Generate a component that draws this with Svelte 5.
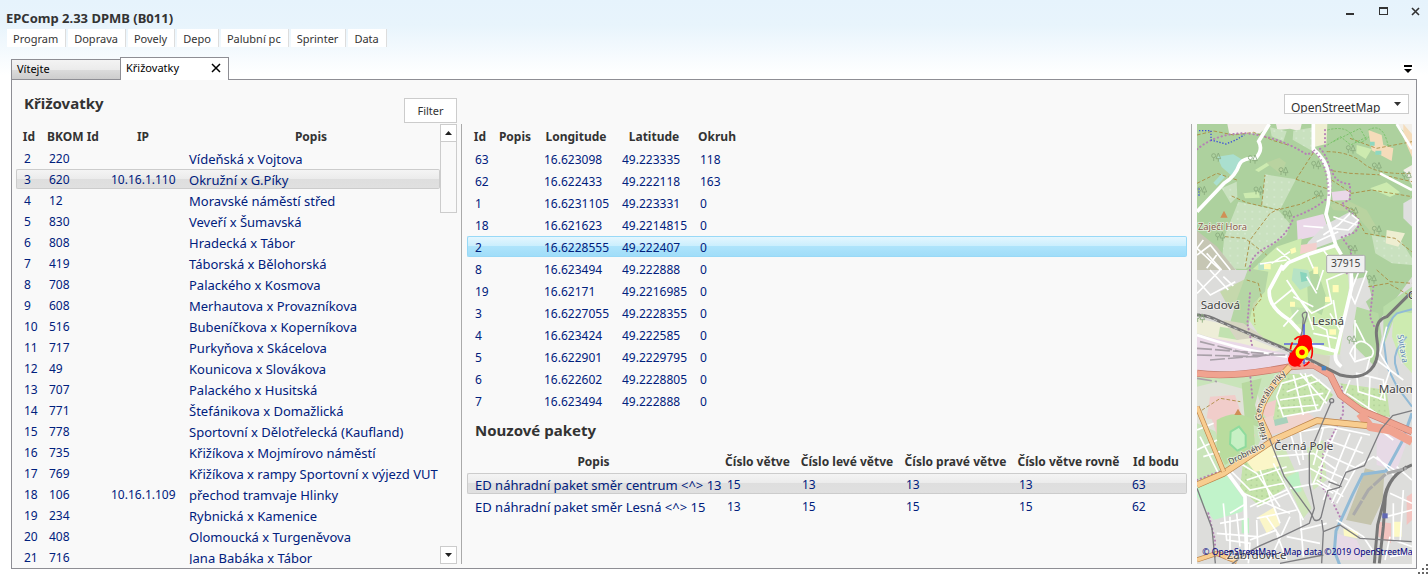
<script>
  const menu = ['Program', 'Doprava', 'Povely', 'Depo', 'Palubní pc', 'Sprinter', 'Data'];

  const crossings = [
    { id: 2, bkom: 220, ip: '', name: 'Vídeňská x Vojtova' },
    { id: 3, bkom: 620, ip: '10.16.1.110', name: 'Okružní x G.Píky' },
    { id: 4, bkom: 12, ip: '', name: 'Moravské náměstí střed' },
    { id: 5, bkom: 830, ip: '', name: 'Veveří x Šumavská' },
    { id: 6, bkom: 808, ip: '', name: 'Hradecká x Tábor' },
    { id: 7, bkom: 419, ip: '', name: 'Táborská x Bělohorská' },
    { id: 8, bkom: 708, ip: '', name: 'Palackého x Kosmova' },
    { id: 9, bkom: 608, ip: '', name: 'Merhautova x Provazníkova' },
    { id: 10, bkom: 516, ip: '', name: 'Bubeníčkova x Koperníkova' },
    { id: 11, bkom: 717, ip: '', name: 'Purkyňova x Skácelova' },
    { id: 12, bkom: 49, ip: '', name: 'Kounicova x Slovákova' },
    { id: 13, bkom: 707, ip: '', name: 'Palackého x Husitská' },
    { id: 14, bkom: 771, ip: '', name: 'Štefánikova x Domažlická' },
    { id: 15, bkom: 778, ip: '', name: 'Sportovní x Dělotřelecká (Kaufland)' },
    { id: 16, bkom: 735, ip: '', name: 'Křižíkova x Mojmírovo náměstí' },
    { id: 17, bkom: 769, ip: '', name: 'Křižíkova x rampy Sportovní x výjezd VUT' },
    { id: 18, bkom: 106, ip: '10.16.1.109', name: 'přechod tramvaje Hlinky' },
    { id: 19, bkom: 234, ip: '', name: 'Rybnická x Kamenice' },
    { id: 20, bkom: 408, ip: '', name: 'Olomoucká x Turgeněvova' },
    { id: 21, bkom: 716, ip: '', name: 'Jana Babáka x Tábor' },
  ];

  const points = [
    [63, '16.623098', '49.223335', 118],
    [62, '16.622433', '49.222118', 163],
    [1, '16.6231105', '49.223331', 0],
    [18, '16.621623', '49.2214815', 0],
    [2, '16.6228555', '49.222407', 0],
    [8, '16.623494', '49.222888', 0],
    [19, '16.62171', '49.2216985', 0],
    [3, '16.6227055', '49.2228355', 0],
    [4, '16.623424', '49.222585', 0],
    [5, '16.622901', '49.2229795', 0],
    [6, '16.622602', '49.2228805', 0],
    [7, '16.623494', '49.222888', 0],
  ];

  const packets = [
    { name: 'ED náhradní paket směr centrum <^> 13', values: [15, 13, 13, 13, 63] },
    { name: 'ED náhradní paket směr Lesná <^> 15', values: [13, 15, 15, 15, 62] },
  ];

  // positions of the tree symbols in the woods
  const trees = [[78, 112], [188, 118], [378, 135], [482, 88], [560, 140], [650, 168], [36, 212], [205, 212], [386, 224], [292, 284], [490, 275], [560, 330], [90, 350], [545, 478], [485, 660], [30, 595], [488, 388], [280, 154]];

  let selectedCrossing = 3;
  let selectedPoint = 2;
  let selectedPacket = 0;
  let mapSource = 'OpenStreetMap';
</script>

<div class="window">
  <header>
    <h1>EPComp 2.33 DPMB (B011)</h1>
    <div class="window-buttons">
      <button aria-label="Minimalizovat">
        <svg width="12" height="12" viewBox="0 0 12 12"><rect x="2" y="7" width="8" height="2" fill="#333" /></svg>
      </button>
      <button aria-label="Maximalizovat">
        <svg width="12" height="12" viewBox="0 0 12 12"><path d="M2 1h9v8H2z M3 3v5h7V3z" fill="#333" fill-rule="evenodd" /></svg>
      </button>
      <button aria-label="Zavřít">
        <svg width="12" height="12" viewBox="0 0 12 12"><path d="M2 2l7 7M9 2L2 9" stroke="#333" stroke-width="1.600" /></svg>
      </button>
    </div>
  </header>

  <nav>
    {#each menu as item}
      <button>{item}</button>
    {/each}
  </nav>

  <div class="tabs">
    <button class="tab">Vítejte</button>
    <div class="tab active">
      <button>Křižovatky</button>
      <button class="close" aria-label="Zavřít záložku">
        <svg width="10" height="10" viewBox="0 0 10 10"><path d="M1 1l8 8M9 1L1 9" stroke="#000" stroke-width="1.500" /></svg>
      </button>
    </div>
    <button class="tab-list" aria-label="Seznam záložek">
      <svg width="8" height="8" viewBox="0 0 8 8"><path d="M0 0h8v2H0z M0 4h8l-4 4z" fill="#000" /></svg>
    </button>
  </div>

  <main>
    <section class="crossings">
      <div class="bar">
        <h2>Křižovatky</h2>
        <button class="filter">Filter</button>
      </div>
      <div class="list">
        <div class="rows">
          <table>
            <colgroup>
              <col class="w-id"><col class="w-bkom"><col class="w-coord"><col>
            </colgroup>
            <thead>
              <tr><th>Id</th><th>BKOM Id</th><th>IP</th><th>Popis</th></tr>
            </thead>
            <tbody>
              {#each crossings as c}
                <tr class:selected={c.id === selectedCrossing} on:click={() => (selectedCrossing = c.id)}>
                  <td>{c.id}</td>
                  <td>{c.bkom}</td>
                  <td>{c.ip}</td>
                  <td class="name">{c.name}</td>
                </tr>
              {/each}
            </tbody>
          </table>
        </div>
        <div class="scrollbar">
          <button aria-label="Nahoru">
            <svg width="8" height="4" viewBox="0 0 8 4"><path d="M0 4h7L3.500 0z" fill="#222" /></svg>
          </button>
          <div class="thumb"></div>
          <button class="down" aria-label="Dolů">
            <svg width="8" height="4" viewBox="0 0 8 4"><path d="M0 0h7L3.500 4z" fill="#222" /></svg>
          </button>
        </div>
      </div>
    </section>

    <section class="detail">
      <table class="tall">
        <colgroup>
          <col class="w-id"><col class="w-popis"><col class="w-coord"><col class="w-coord"><col class="w-okruh"><col>
        </colgroup>
        <thead>
          <tr><th>Id</th><th>Popis</th><th>Longitude</th><th>Latitude</th><th>Okruh</th><th></th></tr>
        </thead>
        <tbody>
          {#each points as [id, lon, lat, okruh]}
            <tr class:active={id === selectedPoint} on:click={() => (selectedPoint = id)}>
              <td>{id}</td>
              <td></td>
              <td>{lon}</td>
              <td>{lat}</td>
              <td>{okruh}</td>
              <td></td>
            </tr>
          {/each}
        </tbody>
      </table>

      <h2>Nouzové pakety</h2>
      <table class="tall">
        <colgroup>
          <col><col class="w-branch"><col class="w-left"><col class="w-right"><col class="w-right"><col class="w-point">
        </colgroup>
        <thead>
          <tr>
            <th>Popis</th>
            <th>Číslo větve</th>
            <th>Číslo levé větve</th>
            <th>Číslo pravé větve</th>
            <th>Číslo větve rovně</th>
            <th>Id bodu</th>
          </tr>
        </thead>
        <tbody>
          {#each packets as packet, i}
            <tr class:selected={i === selectedPacket} on:click={() => (selectedPacket = i)}>
              <td class="name">{packet.name}</td>
              {#each packet.values as value}
                <td>{value}</td>
              {/each}
            </tr>
          {/each}
        </tbody>
      </table>
    </section>

    <section class="map">
      <div class="source">
        <select aria-label="Mapový podklad" bind:value={mapSource}>
          <option>OpenStreetMap</option>
        </select>
        <svg width="7" height="4" viewBox="0 0 7 4"><path d="M0 0h7L3.500 4z" fill="#333" /></svg>
      </div>

      <svg class="canvas" viewBox="21 12 645 1320" preserveAspectRatio="xMinYMin slice">
        <defs>
          <pattern id="orchard" width="22" height="22" patternUnits="userSpaceOnUse">
            <rect width="22" height="22" fill="#c9e1bf" />
            <circle cx="11" cy="11" r="2" fill="#e4f0df" />
          </pattern>
          <pattern id="garden" width="16" height="16" patternUnits="userSpaceOnUse">
            <rect width="16" height="16" fill="#c5e3aa" />
            <circle cx="8" cy="8" r="1.500" fill="#7fa56c" />
          </pattern>
          <g id="tree" fill="none" stroke="#88aa7c" stroke-width="2.500">
            <circle cx="-7" cy="-5" r="6" />
            <path d="M-7 1v10M7 -13l-7 17h14zM7 4v9" />
          </g>
          <path id="piky" d="M232 958L212 880Q222 835 285 765" />
        </defs>

        <!-- land use -->
        <rect x="21" y="12" width="645" height="1320" fill="#dddddb" />
        <path d="M21 12H666V470L600 560 560 610 480 450 300 430 200 490 150 460 21 340z" fill="#add19e" />
        <path d="M112 12H240L210 40 118 42z M258 12H335L330 34 300 26 262 30z M620 12H666V60z M640 150l26-15v60z" fill="#f2efe9" />
        <path d="M225 163l93 15-48 92-55-15z M145 245l120 25 35 42-10 33-60 42-62 60-75-2 10-95z M310 32l62-10-4 72-60-35z M240 22l50 12-10 30-35-15z M95 205l45-20 2 45-20 20z M545 345l90 20 31 50v20l-60-5-50-30z" fill="url(#orchard)" />
        <path d="M82 110l48-7 30 18-35 46-30-26z M70 188l25-27 10 10-25 26z" fill="#aadfcf" />
        <path d="M372 12h40l-3 60-34 8z M590 330l55 10-20 40-38-10z" fill="#eeeed1" />
        <path d="M535 30l40 15 5 30 30 10-5 38-60-32z M640 12l26 30v70l-26-60z" fill="#f5dcba" />
        <path d="M540 65h14v12h-14z M556 92h18v12h-18z" fill="#8fd8c0" />
        <path d="M228 128l40-15 20 15-15 35-25-20z M420 255l50-15 60 30 40 70-20 5-60-70-60-5z" fill="#b9d3a0" />
        <path d="M195 150l35-22 8 8-32 20z M160 220l45-5 5 18-45 2z M500 75l45 12-18 30-28-18z M540 205l50-18 40 30-30 14z" fill="#cdebb0" />
        <path d="M320 302l80-20 12 38-22 25-67 16z M425 216l55-6-4 30-48 2z" fill="#ead8e8" />
        <path d="M405 315l75-40 28 35-28 35-50 20-95 35 20-35z M640 250l26-15v85l-26-25z" fill="#dfdfdf" />
        <path d="M325 376l55-8v30l-55 5z" fill="#f3cfcd" />
        <path d="M180 455l80-75 75-25-5 48 113-30 30 80 10 110-30 140-120 10-120-60-60-90z" fill="#cdebb0" />
        <path d="M480 480l50-10 15 60-35 30-5 140 60-10v90l-100-20-15-60z" fill="#dfdfdd" />
        <path d="M500 560l65 20 10 70-20 90-60-60-5-60z M350 460l30-15 30 90-15 50-40-20z" fill="#b5d8a3" />
        <path d="M21 332l60 48 60 75H21z" fill="#c6c6b4" />
        <path d="M21 450h155l-15 70-60 50-80-10z" fill="#dcdcda" />
        <path d="M90 515l80-40 45 20-20 75-80-10z" fill="#c5d8ac" />
        <path d="M175 445l60 10-10 60-35 35-20 90-50-30 20-70z" fill="#b5d6a5" />
        <path d="M21 595l140 30 20 30 90 35-60 10L21 640z" fill="#eeeed8" />
        <path d="M21 645l130 25 150 35 5 40-160 12L21 752z" fill="#ead9e8" />
        <path d="M90 620l60 10-5 30-60-10z M300 560l50 5 5 40-40 10z" fill="#c2e2b0" />
        <path d="M310 445l45 5 10 45-35 15-25-30z M205 430h30v20h-30z" fill="#b7e3c5" />
        <path d="M330 455l20 5 2 22-18 4z" fill="#89d4bd" />
        <path d="M300 388l16-6 3 14-15 6z M222 432h20v16h-20z M428 495h18v22h-18z M405 530h15v16h-15z M300 545h15v15h-15z M418 628h20v16h-20z M370 440h14v22h-14z" fill="#fffcb8" />
        <path d="M21 755h280l-70 160-40 90L21 1090z" fill="#c9e4ba" />
        <path d="M21 800l60-15 90 25 25-10 15 50-30 70-80 25-80-35z" fill="#e0e2d8" />
        <path d="M60 830l75-5 20 60-55 20-50-10z M60 880l75 5 60 60-15 50-75 10-20-45z M200 860l70-25 30 40-60 30z" fill="#f1cdca" />
        <path d="M155 790l60-15-20 80 20 70-50-20z" fill="#b8d9a0" />
        <path d="M220 895l110-35 40 30 10 20-150 38z" fill="#f0d4ce" />
        <path d="M80 900q60-35 110 0l5 80-90 55-25-50z" fill="#b9dc9e" />
        <path d="M122 935l25-15 20 25v35l-25 12-22-20z" fill="#c7f0c4" stroke="#8edb9d" stroke-width="6" />
        <path d="M250 890l35-14 10 32-40 10z" fill="#a8d1bb" />
        <path d="M100 600l60 10 60 40-80 10z M370 700l50 8-5 50-50-20z" fill="#d6d5c2" />
        <path d="M270 760l100 5 60 60-40 40-140 35z" fill="url(#garden)" />
        <path d="M450 790l140 20 10 80-90-5z M160 1020l90-20 40 100-80 60-60-55z" fill="url(#garden)" />
        <path d="M250 995l35-10 80 180-25 30z M350 985l50-25 10 120-40 30z" fill="#d0e6bb" />
        <path d="M165 1018l85-45 20 65-75 18z M205 1190l50-30 15 55-40 25z" fill="#fbf6c8" />
        <path d="M21 1100l85-40 65 90-15 25-85 25-50-70z" fill="#c1f3ca" />
        <path d="M155 1195h22v45h-22z M290 1072l35-18 10 60-22 5z" fill="#bdf0c4" />
        <path d="M525 1045l58 15-5 80-35 75-75-15 50-130z" fill="#c5c4ad" />
        <path d="M560 950l40-30 60 20-40 110-60-15z M440 1240l60 20 30 60h-90z" fill="#e7dae6" />
        <path d="M565 1205l38 5v60l-38-20z M650 1130l16-10v80l-16 15z" fill="#f2c4c0" />
        <path d="M610 1205h25v45h-25z M460 1225l45 10-3 20-40-8z" fill="#fdf9c4" />
        <path d="M580 560l86-60v80l-56 20-30 80z" fill="#b9dda8" />
        <path d="M610 590l25-15 31 5v180l-35-40-25-70z" fill="#cdebb0" />

        <!-- footpaths and tracks -->
        <g fill="none" stroke="#a9873b" stroke-width="2.500" stroke-dasharray="11 6">
          <path d="M21 45l50-12 60 12 60-8 60 25 50 15" />
          <path d="M318 178l100 30 M318 178l52-80 M270 268l60-15 60-28 M265 270l-95-22-45-20 M270 265l-30 15-60 80-15 85 M215 255l10-90" />
          <path d="M410 95q70 0 110 35t146 30 M410 150l70 10 100 5 86 20 M480 55l80 30 106-20 M425 180l60 40 60-10 121 20" />
          <path d="M420 240l70 30 35 70 90 15 50 40 M105 350l60 5 65 50 M21 190l60-30 60 20" />
          <path d="M560 450l40 35 66 5 M535 500l60-10 70 40 M170 480l35 10 10 45-25 30 5 50 M21 880l70-45 60 10" />
        </g>
        <g fill="none" stroke="#7cc36c" stroke-width="3" stroke-dasharray="7 4">
          <path d="M412 30q60-15 75 20t50 0 M412 75l40-25 30 25 50-25 M430 65l80-40 20 35 M535 30q45-25 60 50" />
        </g>
        <g fill="none" stroke="#b581b5" stroke-width="6" stroke-linecap="round" stroke-dasharray="1 11">
          <path d="M21 88q60-50 150-48 100 12 180 64l40-18q38 40 30 140-40 40-110 65-20 60-80 90t-50 80" />
          <path d="M405 30v50 M425 150q10 40 55 42v45l-25 15 50 45q5 20-10 40l-40 15 30 40-15 70" />
          <path d="M550 500l-10 90 15 35 M180 520l-8 90 15 70 M180 760l8 80 M455 800l5 80-60 120-10 90 40 60 22 45 M55 1180l20 80v60 M21 1080l80-30" />
        </g>
        <g fill="none" stroke="#3a4dda" stroke-width="4" stroke-dasharray="4 5">
          <path d="M27 32h36v28l45 12 30-12 25-16 M27 205v25" />
        </g>

        <!-- watercourses -->
        <g fill="none" stroke="#91bad6" stroke-width="9">
          <path d="M666 568l-45 12q-25 20-40 80l10 80 30 60 45 60" stroke-width="6" />
          <path d="M650 650q-40 40-35 80l10 35" stroke-width="6" />
          <path d="M666 880l-30 85-48 88-70 10-30 60-50 110-5 60 25 65" />
        </g>

        <!-- residential streets -->
        <g fill="none" stroke="#fff" stroke-width="5">
          <path d="M21 405l40-30 60 75 M21 385l70 65 M40 360l-19 25 M50 445l30-40 M95 450l-45-50" />
          <path d="M340 318l60 5 M400 345l45-30 35-35 25 20-30 30-50-5 M380 365l65-30 M430 290l70 25 M260 385l40 35 M210 432l80-12 M300 395l-55 35 M350 400l20 45 M400 390l30 40" />
          <path d="M21 480l40 45 75-40 M60 450l55 60 M21 520l70-70 M100 470l30 28" />
          <path d="M250 555l55-45 60 70 60-30-15-70 60-25 M290 480l60 90 20 60 M310 530l60 30 M280 620l45-50 M370 640l70 15 M430 540l10 60 M350 470l30 50 M400 450l-20 60 M360 605l50 25 10 55 M420 580l30 50" />
          <path d="M480 520l30-75 20 10-35 95z M480 700q20-50 50-30t15 40l-50 15z M495 600v120 M497 610l30 60 M540 710l-15 60 M590 620l-20 80 30 50-30 90 M560 720l80 60 M500 760l80 20 5 60-80-25z M540 770l-5 120 M470 820l90 60 M480 780l-20 50" />
          <path d="M275 790l90-25 55 45 -30 60-110 20-20-60z M290 815l100-35 M270 840l130-20 M310 765l30 120 M345 760l35 110 M265 865l120-10 M330 760l80 90" />
          <path d="M270 945l150-25 120 25 M300 935l30 100 M330 930l10 90 M400 925l-30 110 M440 930l-70 160 M480 940l-80 200 M515 950l-90 200 M250 1010l120-10 70 50 M280 1060l80-15 80 45 M300 1105l80-15 50 30 M410 960l110 40 M400 1000l100 45 M385 1040l90 40 M380 1080l80 50" />
          <path d="M120 1050l60 60 100-20 M150 1030l50 30 70 100 M170 1080l120-40 M180 1160l110-50 M210 1050l60 160 M250 1030l90 170 M160 1120l140 60 M200 1195l120-25 M295 1120l-95 40 M230 1190l40 60" />
          <path d="M100 1150l10 110 70 10-5 60 M120 1190v130 M90 1210l80-15 M140 1180l10 100 M180 1260l80-30 M200 1200l5 120 M300 1190l-60 130 M330 1230l80-20 M290 1250l100 20 M330 1180l10 130 M80 1240l120 10 M260 1240l30 80" />
          <path d="M21 990l60-30 M30 950l60 120 M21 930l50-20 M40 1010l50-15 M120 1180l50-30 M440 1150l60-110 50-30 80 50 M570 930l40 30 M560 1010l55 60 M620 1040l46 40 M600 1120l66 30 M590 1190l76-20 M610 1150v110l56 20 M640 1110l-10 160 M440 1200l80 50 40 60 M600 1250l-15 70 M600 1310l66-10" />
        </g>
        <g fill="none" stroke="#fff" stroke-width="11">
          <path d="M238 12l-32 52q14 25-8 50-42 0-50 20-12 35-45 55L21 275" />
          <path d="M370 12v75q38 32 46 75 8 60-8 120l30 95 16 27" />
          <path d="M275 450l20-22 60-25 85-28" />
          <path d="M278 435l-40 75q-5 50 60 90l70 75 75 20 M484 435v70l-45 190q-10 25 15 45" />
          <path d="M21 645q130 45 270 65" stroke-width="8" />
          <path d="M110 1055l55 75 5 190" />
          <path d="M620 12l46 75 M570 160l96 50" stroke-width="8" />
        </g>
        <path d="M371 90q44 45 45 140" fill="none" stroke="#b98bba" stroke-width="7" stroke-dasharray="4 8" />

        <!-- main roads -->
        <g fill="none" stroke-linejoin="round">
          <path d="M21 760q100 15 280-20l70-5 50 30 30 60 60 45 60 25 95 40" stroke="#c87b6d" stroke-width="21" />
          <path d="M21 760q100 15 280-20l70-5 50 30 30 60 60 45 60 25 95 40" stroke="#f0a390" stroke-width="17" />
          <path d="M510 880l30 40 60 10 66 35" stroke="#f0a390" stroke-width="26" />
          <path d="M300 740q-85 85-92 150l30 65 M21 1095l80-35 150-100 130-58 150 15" stroke="#bd8449" stroke-width="20" />
          <path d="M300 740q-85 85-92 150l30 65 M21 1095l80-35 150-100 130-58 150 15" stroke="#f8cd90" stroke-width="16" />
          <path d="M21 860l80 195 M21 1320l60-20 60 25" stroke="#bd8449" stroke-width="15" />
          <path d="M21 860l80 195 M21 1320l60-20 60 25" stroke="#f8cd90" stroke-width="11" />
        </g>

        <!-- railways and tram lines -->
        <g fill="none" stroke="#777">
          <path d="M21 585q30-2 70 20l180 75 100 45 80 40q60 15 90-15t20-90 30-70l75-75" stroke-width="9" />
          <path d="M30 580l70 30 200 85 90 45" stroke="#e5e5e5" stroke-width="2" stroke-dasharray="12 10" />
          <path d="M30 665l160 40 110 0 M21 685l200 15 M21 705l180 5 50-10 M60 720l180-15 M21 775l60 10" stroke="#a8a0a8" stroke-width="5" stroke-dasharray="45 9" />
          <path d="M666 1035q-75 30-85 110l-18 70-10 115 M650 1040q-65 40-65 110l-5 70-12 110" stroke-width="9" />
          <path d="M490 1185l45-75 55-50 60-15" stroke="#aaa" stroke-width="9" stroke-dasharray="50 4" />
        </g>
        <g fill="none" stroke="#7d7d80" stroke-width="4">
          <path d="M335 650l5-55q-8-15 4-18t4 18l-18 60" />
          <path d="M238 955l45 115 80 110 10 20q15 5 20-8l20-80 35-10 20-45 55-20 50-110 35-40 58-15" />
          <path d="M424 845l-66 155v90l15 75-15 45-95 45q-100 35-160 100 M395 1200l5 35-5 95 M400 1235l50-20 60 40 155 10" />
          <path d="M21 1105l45 120 10 105 M270 1330l130-25 M415 1085l40 15" />
          <circle cx="425" cy="842" r="6" />
        </g>
        <path d="M577 1180h16v15h-16z" fill="#6168b4" />
        <path d="M395 738h13v13h-13z" fill="#4a82bd" />

        {#each trees as [x, y]}
          <use href="#tree" {x} {y} />
        {/each}
        <path d="M102 272l11 21H91z M144 866l11 19h-22z" fill="#d08f55" />

        <g class="labels">
          <text class="peak" x="24" y="331">Zaječí Hora</text>
          <text x="32" y="566">Sadová</text>
          <text x="366" y="614">Lesná</text>
          <text x="654" y="538">O</text>
          <text x="566" y="818">Malom</text>
          <text x="252" y="989">Černá Pole</text>
          <text x="110" y="1317">Zábrdovice</text>
          <text class="street" transform="translate(120 1034) rotate(-26)">Drobného</text>
          <text class="street"><textPath href="#piky">třída Generála Píky</textPath></text>
          <text class="river" transform="translate(622 645) rotate(80)">Svitava</text>
        </g>
        <rect x="410" y="406" width="115" height="52" rx="4" fill="#f0f0f0" stroke="#aaa" stroke-width="3" />
        <text class="badge" x="467" y="442">37915</text>

        <!-- selected crossing -->
        <path d="M342 613v120M282 672h120" stroke="#5a64e0" stroke-width="5" />
        <ellipse cx="334" cy="694" rx="33" ry="45" fill="none" stroke="#f00" stroke-width="5" stroke-dasharray="22 10" />
        <path d="M345 665v12L315 719" fill="none" stroke="#f00" stroke-width="42" stroke-linecap="round" stroke-linejoin="round" />
        <circle cx="336" cy="697" r="14" fill="#f00" stroke="#ff0" stroke-width="11" />
        <text class="copyright" x="37" y="1306">© OpenStreetMap - Map data ©2019 OpenStreetMa</text>
      </svg>
    </section>
  </main>

  <svg class="grip" width="10" height="10" viewBox="0 0 10 10">
    <path d="M8 0h2v2H8z M4 4h2v2H4z M8 4h2v2H8z M0 8h2v2H0z M4 8h2v2H4z M8 8h2v2H8z" fill="#666" />
  </svg>
</div>

<style>
  :global(body) {
    margin: 0;
    background: #fff;
  }
  .window {
    position: relative;
    display: flex;
    flex-direction: column;
    box-sizing: border-box;
    height: 100vh;
    padding: 0 11px 5px;
    background: linear-gradient(#e6f3fc, #e8f4fc 25px, #fff 75px);
    font-family: "Noto Sans", "Open Sans", sans-serif;
    font-size: 12px;
    color: #333;
  }
  button {
    display: flex;
    align-items: center;
    justify-content: center;
    margin: 0;
    padding: 0;
    border: none;
    background: none;
    font: inherit;
    color: inherit;
  }
  header {
    display: flex;
    justify-content: space-between;
    height: 29px;
    margin: 0 -5px;
  }
  h1 {
    margin: 8px 0 0;
    font-size: 13px;
    line-height: 20px;
    font-weight: bold;
  }
  .window-buttons {
    display: flex;
    align-items: flex-start;
    gap: 21px;
    padding-top: 6px;
  }
  nav {
    display: flex;
    gap: 2px;
    margin-left: -4px;
  }
  nav button {
    height: 18px;
    padding: 0 7px 0 6px;
    border-right: 1px solid #ddd;
    background: #fff;
    font-size: 11px;
  }
  .tabs {
    display: flex;
    align-items: flex-end;
    height: 23px;
    margin: 10px 0 -1px;
    z-index: 1;
  }
  .tab {
    display: flex;
    align-items: center;
    justify-content: space-between;
    box-sizing: border-box;
    width: 110px;
    height: 21px;
    padding: 0 7px 3px 5px;
    border: 1px solid #8e8e94;
    background: linear-gradient(#f3f3f3, #ebebeb 50%, #dcdcdc 50%, #cdcdcd);
    font-size: 11px;
    color: #000;
  }
  .tab.active {
    width: 109px;
    height: 23px;
    margin-left: -1px;
    border-bottom: none;
    background: #fff;
  }
  .tab-list {
    width: 13px;
    height: 12px;
    margin: 0 3px 5px auto;
    background: #fff;
  }
  main {
    display: grid;
    grid-template-columns: 449px 1fr 224px;
    flex: 1;
    min-height: 0;
    border: 1px solid #8e8e94;
    background: #f9f9f9;
  }
  h2 {
    margin: 0;
    font-size: 15px;
    line-height: 20px;
    font-weight: bold;
  }
  .crossings {
    display: flex;
    flex-direction: column;
    min-height: 0;
    padding: 0 4px 4px;
  }
  .bar {
    display: flex;
    justify-content: space-between;
    height: 44px;
    padding-left: 8px;
  }
  .bar h2 {
    margin-top: 13px;
  }
  .filter {
    box-sizing: border-box;
    width: 53px;
    height: 25px;
    margin-top: 18px;
    border: 1px solid #ccc;
    background: #fff;
    font-size: 11px;
  }
  .list {
    display: flex;
    flex: 1;
    min-height: 0;
  }
  .rows {
    flex: 1;
    overflow: hidden;
  }
  .scrollbar {
    display: flex;
    flex-direction: column;
    width: 17px;
  }
  .scrollbar button {
    box-sizing: border-box;
    height: 18px;
    border: 1px solid #ccc;
    background: #fff;
  }
  .scrollbar .down {
    margin-top: auto;
  }
  .thumb {
    height: 70px;
    border: 1px solid #ccc;
    border-top: none;
  }
  table {
    width: 100%;
    table-layout: fixed;
    border-collapse: separate;
    border-spacing: 0 1px;
    color: #00207d;
  }
  th {
    height: 22px;
    padding: 0;
    font-weight: bold;
    color: #333;
    white-space: nowrap;
  }
  td {
    box-sizing: border-box;
    height: 20px;
    padding: 2px 0 0 7px;
    border: solid transparent;
    border-width: 1px 0;
    line-height: 16px;
    white-space: nowrap;
  }
  .tall td {
    height: 21px;
  }
  td:first-child {
    border-left-width: 1px;
    border-radius: 2px 0 0 2px;
  }
  td:last-child {
    border-right-width: 1px;
    border-radius: 0 2px 2px 0;
  }
  .name {
    font-size: 13px;
  }
  .selected td {
    border-color: #ccc;
    background: linear-gradient(#f4f4f4, #ebebeb 50%, #dedede 50%, #e0e0e0);
  }
  .active td {
    border-color: #98d9f7;
    background: linear-gradient(#e4f6fe, #c9eefd 50%, #aee4fb 50%, #a0ddf9);
  }
  .w-id {
    width: 26px;
  }
  .w-bkom {
    width: 62px;
  }
  .w-popis {
    width: 44px;
  }
  .w-coord {
    width: 78px;
  }
  .w-okruh {
    width: 48px;
  }
  .w-branch {
    width: 75px;
  }
  .w-left {
    width: 104px;
  }
  .w-right {
    width: 113px;
  }
  .w-point {
    width: 62px;
  }
  .detail {
    margin: 44px 0 4px;
    padding: 0 4px 0 5px;
    border: solid #aaa;
    border-width: 0 1px;
  }
  .detail h2 {
    margin: 8px 0 9px 8px;
  }
  .map {
    display: flex;
    flex-direction: column;
    min-height: 0;
    padding: 14px 4px 4px 5px;
  }
  .source {
    position: relative;
    align-self: flex-end;
    width: 125px;
    height: 30px;
    margin-right: 3px;
  }
  .source svg {
    position: absolute;
    top: 8px;
    right: 8px;
    pointer-events: none;
  }
  select {
    appearance: none;
    box-sizing: border-box;
    width: 100%;
    height: 20px;
    padding: 4px 0 0 6px;
    border: 1px solid #ccc;
    border-radius: 0;
    background: #fff;
    font: inherit;
    color: inherit;
  }
  .canvas {
    flex: 1;
    width: 100%;
    min-height: 0;
  }
  .labels text {
    font-size: 35px;
    fill: #444;
    stroke: rgba(255, 255, 255, 0.6);
    stroke-width: 5px;
    paint-order: stroke;
  }
  .labels .peak {
    font-size: 28px;
    fill: #8a5a4a;
  }
  .labels .street {
    font-size: 25px;
  }
  .labels .river {
    font-size: 26px;
    fill: #5b86b5;
  }
  .badge {
    font-size: 31px;
    text-anchor: middle;
    fill: #444;
  }
  .copyright {
    font-size: 26px;
    fill: #000080;
  }
  .grip {
    position: absolute;
    right: 0;
    bottom: 0;
  }
</style>
